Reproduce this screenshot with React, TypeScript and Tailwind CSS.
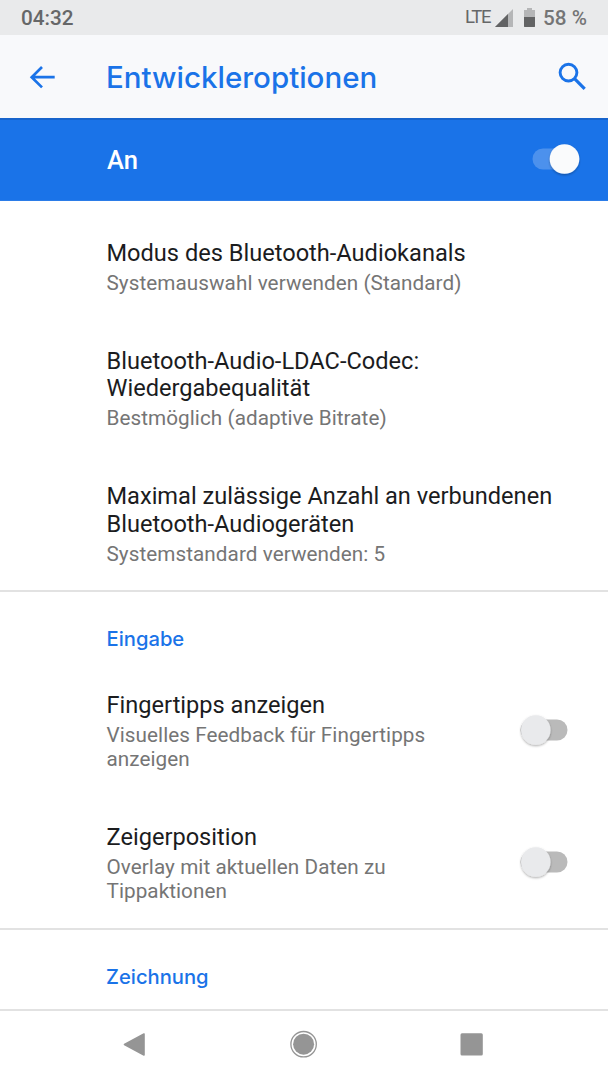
import React from "react";

function Toggle({ on = false }: { on?: boolean }) {
  return (
    <svg className="mb-0.5 h-10 w-16 shrink-0" viewBox="0 0 64 40" aria-hidden="true">
      <defs>
        <filter id="knobShadow" x="-30%" y="-30%" width="160%" height="160%">
          <feDropShadow dx="0" dy="1.2" stdDeviation="0.9" floodOpacity="0.32" />
        </filter>
      </defs>
      <rect x="8.5" y="9.5" width="47" height="21" rx="10.5" fill={on ? "#ffffff" : "#bababa"} fillOpacity={on ? 0.22 : 1} />
      <circle cx={on ? 40.5 : 23.8} cy="20" r="14.8" fill={on ? "#fafbfc" : "#e9eaec"} filter="url(#knobShadow)" />
    </svg>
  );
}

function Preference({ title, summary, toggle = false }: { title: string[]; summary: string[]; toggle?: boolean }) {
  return (
    <div className="flex items-center justify-between pr-8">
      <div className="whitespace-nowrap">
        <div className="pt-px text-[23.6px] leading-[27.7px] text-[#1b1c1e]">
          {title.map((line) => <div key={line}>{line}</div>)}
        </div>
        <div className="pt-[3px] text-[20.7px] leading-[24.2px] tracking-[0.06px] text-[#757575]">
          {summary.map((line) => <div key={line}>{line}</div>)}
        </div>
      </div>
      {toggle && <Toggle />}
    </div>
  );
}

function Category({ children }: { children: string }) {
  return <h2 className="font-['Inter',sans-serif] text-[20.2px] leading-6 font-medium text-[#1a73e8]">{children}</h2>;
}

export default function App() {
  return (
    <div className="flex h-[1080px] w-[608px] flex-col overflow-hidden bg-white font-['Roboto',sans-serif]">
      <header className="flex h-[35px] shrink-0 items-center justify-between bg-[#e9eaeb] pt-[3px] pr-[21px] pl-[21px] text-[20.7px] text-[#666768]">
        <span className="font-medium">04:32</span>
        <div className="flex items-center">
          <span className="mb-0.5 text-[18.5px] tracking-[-1.3px]">LTE</span>
          <svg className="mb-0.5 ml-[5px] h-[18px] w-[18px]" viewBox="0 0 18 18" aria-hidden="true">
            <path d="M18 0V18H0Z" fill="#b5b6b7" />
            <path d="M13 5V18H0Z" fill="#626364" />
          </svg>
          <svg className="mb-0.5 ml-[11px] h-[19px] w-[11px]" viewBox="0 0 11 19" aria-hidden="true">
            <path d="M3 0H8V2H11V19H0V2H3Z" fill="#b5b6b7" />
            <path d="M0 9H11V18.2Q11 19 10.2 19H.8Q0 19 0 18.2Z" fill="#626364" />
          </svg>
          <span className="ml-2 font-medium text-[#747576]">58 %</span>
        </div>
      </header>

      <div className="flex h-[83px] shrink-0 items-center bg-[#f8f9fb] pr-5 pl-[29px] text-[#1a73e8]">
        <svg className="h-[26px] w-[27px]" viewBox="0 0 27 26" fill="none" stroke="currentColor" strokeWidth="2.7" aria-hidden="true">
          <path d="M25.7 13.2H2.8M13 3L2.7 13.2L13 23.4" />
        </svg>
        <h1 className="ml-[50px] font-['Inter',sans-serif] text-[29.5px] leading-9 font-medium">Entwickleroptionen</h1>
        <svg className="mb-0.5 ml-auto h-8 w-8" viewBox="0 0 32 32" fill="none" stroke="currentColor" strokeWidth="2.9" aria-hidden="true">
          <circle cx="12.5" cy="12.6" r="8.4" />
          <path d="M18.5 18.6L28.7 28.8" strokeWidth="3.2" />
        </svg>
      </div>

      <div className="flex h-[83px] shrink-0 items-center justify-between border-t-2 border-b border-t-[#1764cc] border-b-[#2b7ce8] bg-[#1a73e8] pr-5 pl-[107px]">
        <span className="pt-px text-[25.5px] font-medium text-white">An</span>
        <Toggle on />
      </div>

      <main className="flex min-h-0 flex-1 flex-col">
        <section className="flex h-[391px] shrink-0 flex-col gap-[51.8px] border-b-2 border-[#e2e2e2] pt-[38px] pl-[106.5px]">
          <Preference title={["Modus des Bluetooth-Audiokanals"]} summary={["Systemauswahl verwenden (Standard)"]} />
          <Preference title={["Bluetooth-Audio-LDAC-Codec:", "Wiedergabequalität"]} summary={["Bestmöglich (adaptive Bitrate)"]} />
          <Preference title={["Maximal zulässige Anzahl an verbundenen", "Bluetooth-Audiogeräten"]} summary={["Systemstandard verwenden: 5"]} />
        </section>
        <section className="flex h-[338px] shrink-0 flex-col border-b-2 border-[#e2e2e2] pt-[35px] pl-[106.5px]">
          <Category>Eingabe</Category>
          <div className="flex flex-col gap-[52px] pt-10">
            <Preference title={["Fingertipps anzeigen"]} summary={["Visuelles Feedback für Fingertipps", "anzeigen"]} toggle />
            <Preference title={["Zeigerposition"]} summary={["Overlay mit aktuellen Daten zu", "Tippaktionen"]} toggle />
          </div>
        </section>
        <section className="pt-[35px] pl-[106px]">
          <Category>Zeichnung</Category>
        </section>
      </main>

      <nav className="flex h-[71px] shrink-0 items-start justify-between border-t-2 border-[#e2e2e2] pt-[19px] pr-[122px] pl-[121px] text-[#959595]">
        <svg className="h-8 w-8" viewBox="0 0 32 32" aria-hidden="true">
          <path d="M23 4V25L3.5 14.5Z" fill="currentColor" stroke="currentColor" strokeWidth="1.6" strokeLinejoin="round" />
        </svg>
        <svg className="h-8 w-8" viewBox="0 0 32 32" aria-hidden="true">
          <circle cx="15.6" cy="14.2" r="12.7" fill="none" stroke="currentColor" strokeWidth="1.3" />
          <circle cx="15.6" cy="14.2" r="10.5" fill="currentColor" />
        </svg>
        <svg className="h-8 w-8" viewBox="0 0 32 32" aria-hidden="true">
          <rect x="6.5" y="3.2" width="22.3" height="22.3" rx="1.5" fill="currentColor" />
        </svg>
      </nav>
    </div>
  );
}
